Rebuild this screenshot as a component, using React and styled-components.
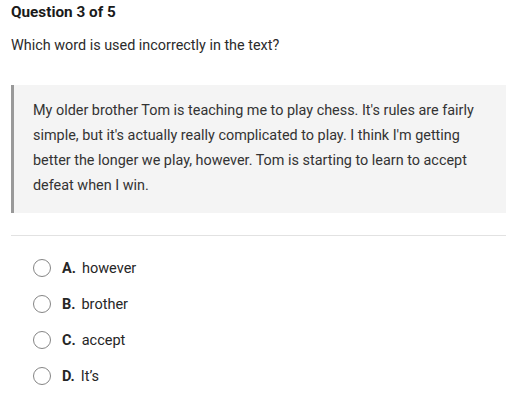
import styled, { createGlobalStyle } from "styled-components";

const GlobalStyle = createGlobalStyle`
  body {
    margin: 0;
    background: #fff;
    font-family: Roboto, "Liberation Sans", sans-serif;
    color: #222;
  }
`;

const Page = styled.div`
  padding: 3px 12px 0 11px;
  width: 518px;
  box-sizing: border-box;
`;

const Title = styled.h2`
  margin: 0;
  font-size: 15.3px;
  font-weight: 700;
  line-height: 18px;
  color: #1a1a1a;
`;

const Prompt = styled.p`
  margin: 15px 0 0;
  font-size: 14.4px;
  line-height: 20px;
  color: #2b2b2b;
`;

const Passage = styled.blockquote`
  margin: 29px 0 0;
  padding: 13px 20px 15px 19px;
  background: #f4f4f4;
  border-left: 3px solid #999;
  font-size: 14.4px;
  line-height: 25px;
  color: #333;
`;

const Divider = styled.hr`
  margin: 22px 0 0;
  border: 0;
  border-top: 1px solid #e2e2e2;
`;

const Options = styled.ul`
  list-style: none;
  margin: 0;
  padding: 22px 0 0 22px;
  display: flex;
  flex-direction: column;
  gap: 16px;
`;

const Option = styled.li`
  display: flex;
  align-items: center;
  height: 20px;
  font-size: 14.5px;
  color: #262626;
`;

const Radio = styled.span`
  width: 18px;
  height: 18px;
  box-sizing: border-box;
  border: 1px solid #858585;
  border-radius: 50%;
  margin-right: 11px;
  flex-shrink: 0;
`;

const Letter = styled.b`
  font-weight: 700;
  margin-right: 6px;
`;

const options = [
  ["A.", "however"],
  ["B.", "brother"],
  ["C.", "accept"],
  ["D.", "It\u2019s"],
];

export default function App() {
  return (
    <>
      <GlobalStyle />
      <Page>
        <Title>Question 3 of 5</Title>
        <Prompt>Which word is used incorrectly in the text?</Prompt>
        <Passage>
          My older brother Tom is teaching me to play chess. It's rules are fairly
          simple, but it's actually really complicated to play. I think I'm getting
          better the longer we play, however. Tom is starting to learn to accept
          defeat when I win.
        </Passage>
        <Divider />
        <Options>
          {options.map(([l, t]) => (
            <Option key={l}>
              <Radio />
              <Letter>{l}</Letter>
              {t}
            </Option>
          ))}
        </Options>
      </Page>
    </>
  );
}
